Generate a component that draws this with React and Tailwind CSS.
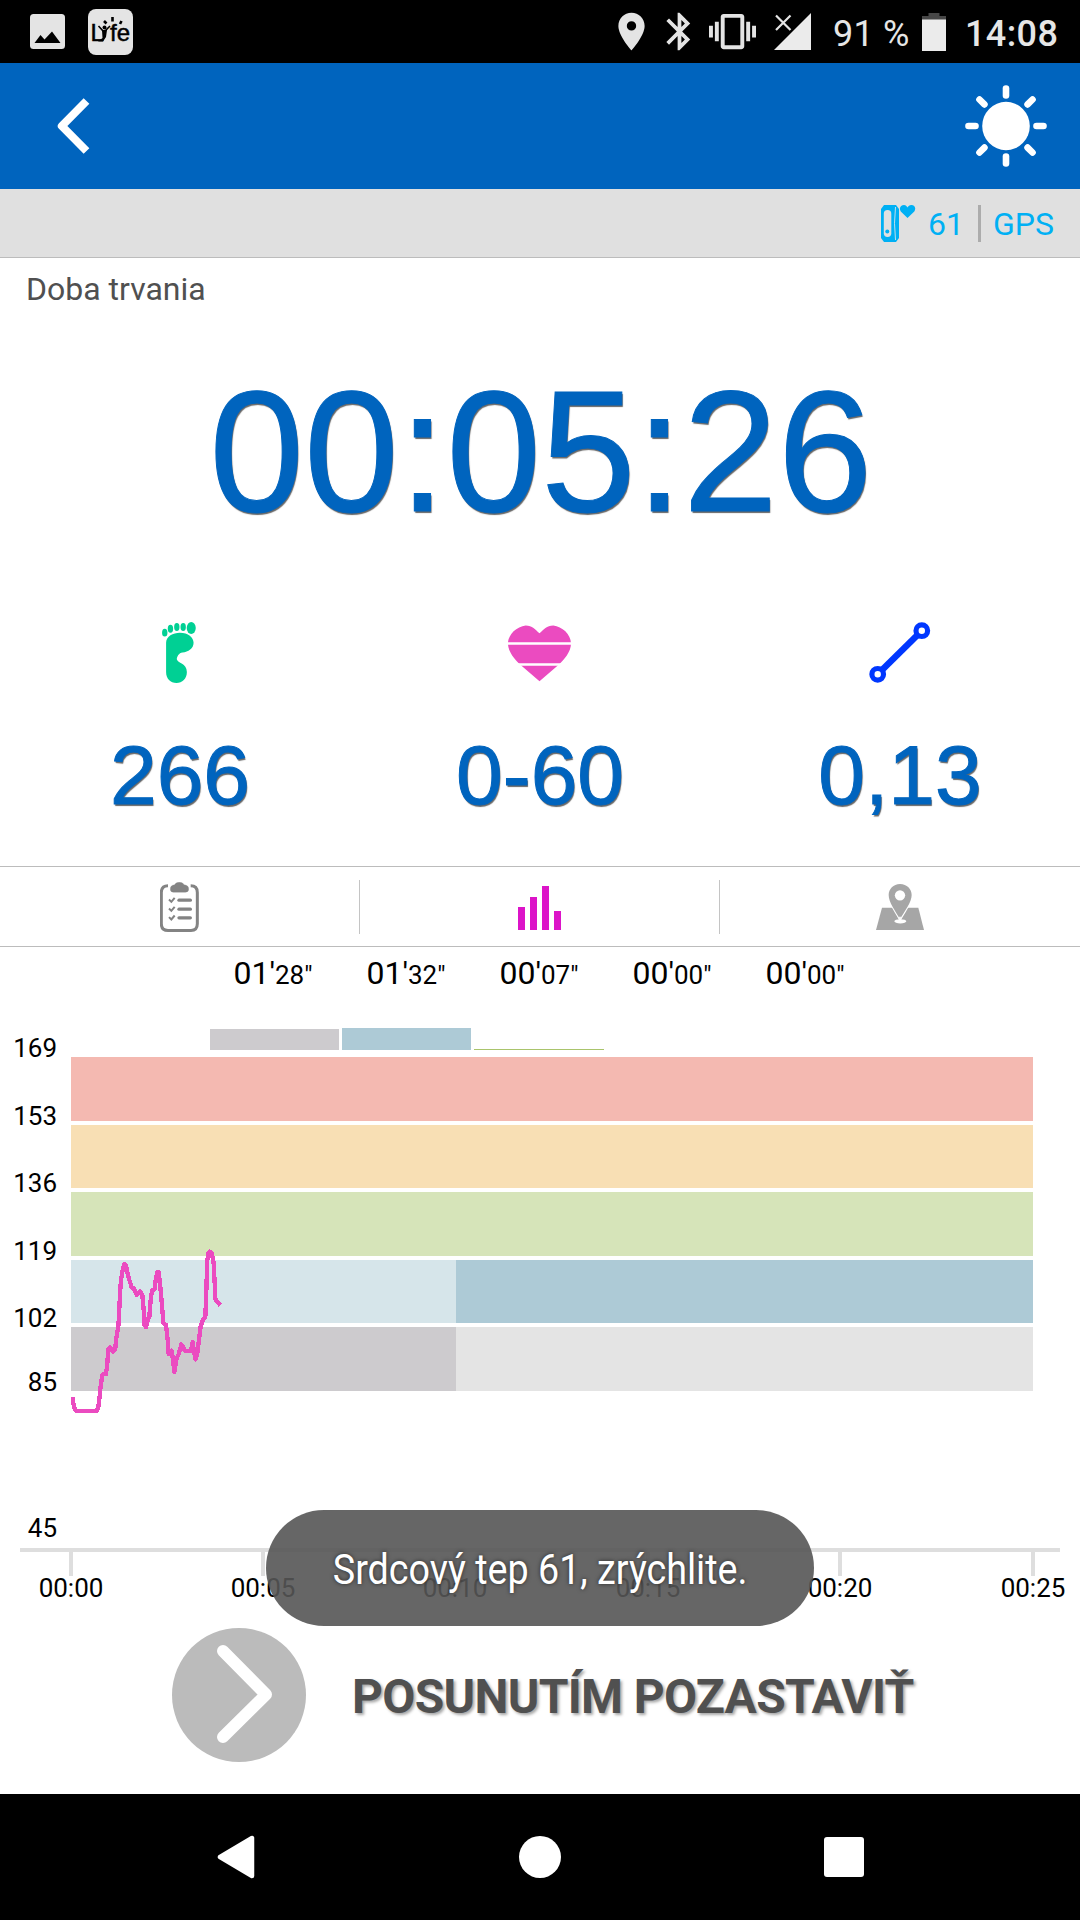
import React from 'react';
import { MdBluetooth, MdLocationOn, MdVibration } from 'react-icons/md';

const zoneTimes = [
  { min: '01', sec: '28' },
  { min: '01', sec: '32' },
  { min: '00', sec: '07' },
  { min: '00', sec: '00' },
  { min: '00', sec: '00' },
];

const bands = [
  { label: '169', y: 57, h: 64, color: '#f4b9b1' },
  { label: '153', y: 125, h: 63, color: '#f8dfb4' },
  { label: '136', y: 192, h: 64, color: '#d6e4b9' },
  { label: '119', y: 260, h: 63, color: '#d6e5ea', rest: '#adcad6' },
  { label: '102', y: 327, h: 64, color: '#cdcbce', rest: '#e4e4e4' },
];

const ticks = [
  { x: 71, label: '00:00' },
  { x: 263, label: '00:05' },
  { x: 455, label: '00:10' },
  { x: 648, label: '00:15' },
  { x: 840, label: '00:20' },
  { x: 1033, label: '00:25' },
];

// Heart rate samples, in thirds of a pixel
const heartRate =
  '218,532 220,550 223,562 228,573 290,573 295,560 299,530 300,515 303,490 308,463 318,463 322,430 325,387 330,382 340,395 346,385 348,360 355,320 357,290 360,220 363,180 368,150 373,132 378,137 385,170 395,202 402,206 410,225 420,215 427,225 431,270 433,315 438,321 443,300 448,290 452,240 456,212 464,207 467,180 472,156 476,156 480,190 484,235 488,280 490,308 498,315 503,360 506,402 515,392 519,420 523,456 530,415 537,400 544,373 556,393 573,393 578,366 583,400 587,418 592,400 597,360 602,320 608,302 616,290 618,240 620,180 622,120 626,98 630,95 636,102 641,130 644,190 646,235 650,243 661,256';

const StatusBar = () => (
  <div className="flex h-[63px] items-center bg-black pl-[30px] text-[36px] text-[#e6e6e6]">
    <svg width="35" height="35" viewBox="0 0 35 35">
      <rect width="35" height="35" rx="3.5" fill="#e4e4e4" />
      <path d="M4.5 29L10.5 21L14.5 25.5L22 17.5L30.500 29Z" fill="#000" />
    </svg>
    <svg className="ml-[23px]" width="45" height="46" viewBox="0 0 45 46">
      <rect width="45" height="46" rx="8" fill="#e4e4e4" />
      <text x="2.500" y="32" fontSize="24" fontFamily="Liberation Sans" stroke="#000" strokeWidth="0.5">L</text>
      <text x="22" y="32" fontSize="24" fontFamily="Liberation Sans" stroke="#000" strokeWidth="0.5" textLength="20">fe</text>
      <circle cx="16.500" cy="18.500" r="2" />
      <path d="M10.500 17L16 23L22 17" stroke="#000" strokeWidth="1.600" fill="none" />
      <path d="M14 21H19L18 28L15 32.500H10L14.500 29Z" />
      <path d="M16 12L18.500 14.500M24.500 8V12.500M33.500 12L32 15" stroke="#000" strokeWidth="2.600" />
    </svg>
    <MdLocationOn className="ml-[476px] text-[#e4e4e4]" size={45} />
    <MdBluetooth className="ml-[3px] text-[#e4e4e4]" size={45} />
    <MdVibration className="ml-[7px] text-[#e4e4e4]" size={47} />
    <svg className="ml-[18px]" width="37" height="37" viewBox="0 0 37 37">
      <path d="M0 37H37V0Z" fill="#ebebeb" />
      <path d="M2 2.500L16.500 17M16.500 2.500L2 17" stroke="#e4e4e4" strokeWidth="2.200" />
    </svg>
    <div className="ml-[22px] mt-[4px] w-[89px] whitespace-nowrap leading-[66px] tracking-[0.2px]">91 %</div>
    <svg width="24" height="38" viewBox="0 0 24 38">
      <path d="M0 3H6.500V0H17.500V3H24V8H0Z" fill="#474747" />
      <rect y="6.500" width="24" height="31.500" fill="#ebebeb" />
    </svg>
    <div className="ml-[19px] mt-[4px] font-medium leading-[66px] tracking-[0.4px]">14:08</div>
  </div>
);

const Header = () => (
  <div className="flex h-[126px] items-center justify-between bg-[#0064be] pl-[57px] pr-[33px]">
    <svg width="34" height="56" viewBox="0 0 34 56" fill="none">
      <path d="M29.500 3L4.800 28L29.500 53" stroke="#fff" strokeWidth="8" strokeLinejoin="round" />
    </svg>
    <svg width="82" height="84" viewBox="-41 -42 82 84">
      <ellipse rx="23.800" ry="24.200" fill="#fff" />
      {[0, 45, 90, 135, 180, 225, 270, 315].map((a) => (
        <path key={a} d="M0 -30.500V-37.500" transform={`rotate(${a})`} stroke="#fff" strokeWidth="6.600" strokeLinecap="round" />
      ))}
    </svg>
  </div>
);

const SensorBar = () => (
  <div className="flex h-[69px] items-center justify-end border-b border-[#bcbcbc] bg-[#e0e0e0] pr-[26px] text-[32px] text-[#00b0f4]">
    <svg width="35" height="37" viewBox="0 0 35 37" fill="#00b0f4">
      <path d="M3 0H15L18 4V33L15 37H3L0 33V4Z" />
      <rect x="2.800" y="5" width="7.500" height="27" rx="3.700" fill="#e0e0e0" />
      <path d="M14.500 2Q12.500 18 14.500 35" stroke="#bfe0ee" strokeWidth="1" fill="none" />
      <circle cx="6.300" cy="26.500" r="2" />
      <path d="M26.500 13L19.800 6.500C17.500 3 20 0 23 0C25 0 26 1.500 26.500 2.500C27 1.500 28 0 30.500 0C33.500 0 35.500 3 33.300 6.500Z" />
    </svg>
    <span className="ml-[12px] mt-[1px] w-[50px]">61</span>
    <span className="h-[37px] w-[3px] bg-[#acacac]" />
    <span className="ml-[12px] mt-[1px]">GPS</span>
  </div>
);

const FootIcon = () => (
  <svg className="mr-[2px]" width="34" height="61" viewBox="247 66 101 182" fill="#00d094">
    <ellipse cx="255" cy="98" rx="8" ry="11.500" />
    <ellipse cx="272" cy="86" rx="8" ry="12" />
    <ellipse cx="291" cy="81" rx="8" ry="12" />
    <ellipse cx="310" cy="81" rx="8" ry="12" />
    <ellipse cx="334" cy="84" rx="13.500" ry="18" />
    <path d="M259 128C259 108 280 98 300 98C325 98 341 112 341 128C341 145 325 156 308 157C297 158 291 170 291 177C293 189 321 188 321 215C321 235 307 248 290 248C272 248 259 235 259 215Z" />
  </svg>
);

const HeartIcon = () => (
  <svg className="mr-[1px]" width="63" height="61" viewBox="1284 66 189 182">
    <path
      d="M1378.500 99C1366 89 1357 76 1337 76C1311 79 1284 102 1284 130C1284 155 1305 179 1321 194L1378.500 243L1436 194C1452 179 1473 155 1473 130C1473 102 1446 79 1420 76C1400 76 1391 89 1378.500 99Z"
      fill="#eb4bc0"
    />
    <path d="M1284 130H1473M1284 193H1473" stroke="#fff" strokeWidth="8" />
  </svg>
);

const DistanceIcon = () => (
  <svg width="62" height="61" viewBox="869 622 62 61" fill="none" stroke="#0037ff">
    <circle cx="877.700" cy="674.300" r="5.800" strokeWidth="5.200" />
    <circle cx="921.800" cy="630.700" r="5.800" strokeWidth="5.200" />
    <path d="M882 670L917.500 635" strokeWidth="6.600" />
  </svg>
);

const Stat = ({ icon, value }) => (
  <div className="flex w-[360px] flex-col items-center">
    <div className="h-[80px]">{icon}</div>
    <div className="font-['Liberation_Sans'] text-[84px] leading-[146px] text-[#0064be] [-webkit-text-stroke:1px_#0064be] [text-shadow:1px_2px_1px_rgba(0,0,0,0.6)]">
      {value}
    </div>
  </div>
);

const ClipboardIcon = () => (
  <svg width="39" height="50" viewBox="60 34.500 117 150" fill="none" stroke="#838383">
    <path d="M84 46Q64 46 64 66V160Q64 180 84 180H153Q172 180 172 160V66Q172 46 152 46" strokeWidth="9" />
    <path d="M104 43Q107 35 118 35Q129 35 132 43Q146 44 146 56Q146 65 136 65H100Q91 65 91 56Q91 44 104 43Z" fill="#838383" />
    {[89, 116, 142].map((y) => (
      <g key={y}>
        <path d={`M87 ${y - 2}L94 ${y + 5}L104 ${y - 7}`} strokeWidth="6" />
        <path d={`M117 ${y}H151`} strokeWidth="10" strokeLinecap="round" />
      </g>
    ))}
  </svg>
);

const MapIcon = () => (
  <svg className="mr-[1px]" width="48" height="46" viewBox="46 40 144 138" fill="#a6a6a6">
    <path d="M64 111H173L190 178H46Z" />
    <path
      d="M118 40C98 40 84 55 84 73C84 95 104 120 118 146C132 120 153 95 153 73C153 55 139 40 118 40Z"
      stroke="#fff"
      strokeWidth="7"
      paintOrder="stroke"
    />
    <circle cx="118" cy="74" r="15.500" fill="#fff" />
    <ellipse cx="119" cy="152" rx="18" ry="6.500" fill="#fff" />
    <path d="M118 138V150" stroke="#fff" strokeWidth="5" />
  </svg>
);

const Tabs = () => (
  <div className="flex h-[81px] items-center border-y border-[#bcbcbc]">
    <div className="flex h-[54px] w-[360px] items-center justify-center border-r border-[#c4c4c4]">
      <ClipboardIcon />
    </div>
    <div className="flex h-[54px] w-[360px] items-center justify-center border-r border-[#c4c4c4]">
      <div className="mt-[2px] flex h-[44px] items-end gap-[5px]">
        <div className="h-[23px] w-[7px] bg-[#dc14c8]" />
        <div className="h-[33px] w-[7px] bg-[#dc14c8]" />
        <div className="h-[44px] w-[7px] bg-[#dc14c8]" />
        <div className="h-[19px] w-[7px] bg-[#dc14c8]" />
      </div>
    </div>
    <div className="flex h-[54px] w-[360px] items-center justify-center">
      <MapIcon />
    </div>
  </div>
);

const Chart = () => (
  <svg className="block" width="1080" height="627" viewBox="0 0 1080 627" fontFamily="Roboto, sans-serif" fontSize="26">
    {/* Time spent in each zone */}
    <rect x="210" y="29" width="129" height="21" fill="#cdcbce" />
    <rect x="342" y="28" width="129" height="22" fill="#adcad6" />
    <rect x="474" y="49" width="130" height="1" fill="#a9c46c" />

    {bands.map((b) => (
      <g key={b.label}>
        <rect x="71" y={b.y} width="962" height={b.h} fill={b.color} />
        {b.rest && <rect x="456" y={b.y} width="577" height={b.h} fill={b.rest} />}
        <text x="57" y={b.y} textAnchor="end">{b.label}</text>
      </g>
    ))}
    <text x="57" y="391" textAnchor="end">85</text>
    <text x="57" y="537" textAnchor="end">45</text>

    <polyline
      points={heartRate}
      transform="translate(0 220) scale(0.33333)"
      fill="none"
      stroke="#eb4bc0"
      strokeWidth="13"
      strokeLinejoin="round"
      shapeRendering="crispEdges"
    />

    <rect x="20" y="548" width="1040" height="4" fill="#dedede" />
    {ticks.map((t) => (
      <g key={t.label}>
        <rect x={t.x - 2} y="552" width="4" height="24" fill="#dedede" />
        <text x={t.x} y="597" textAnchor="middle">{t.label}</text>
      </g>
    ))}
  </svg>
);

const SlideToPause = () => (
  <div className="flex h-[167px] items-start pl-[171px]">
    <svg width="136" height="136" viewBox="0 0 136 136" fill="none">
      <circle cx="68" cy="68" r="67" fill="#bbb" />
      <path d="M52 24L95 67.500L52 110" stroke="#fff" strokeWidth="12" strokeLinecap="round" strokeLinejoin="round" />
    </svg>
    <div className="ml-[45px] whitespace-nowrap text-[48px] font-bold leading-[139px] tracking-[-0.68px] text-[#505050] [text-shadow:2px_2px_3px_rgba(0,0,0,0.35)]">
      POSUNUTÍM POZASTAVIŤ
    </div>
  </div>
);

const NavBar = () => (
  <div className="flex h-[126px] items-center justify-between bg-black pl-[217px] pr-[216px]">
    <svg width="38" height="44" viewBox="0 0 38 44">
      <path d="M35 3V41L3 22Z" fill="#fff" stroke="#fff" strokeWidth="4.500" strokeLinejoin="round" />
    </svg>
    <div className="h-[42px] w-[42px] rounded-full bg-white" />
    <div className="h-[40px] w-[40px] rounded-[3px] bg-white" />
  </div>
);

const App = () => {
  return (
    <div className="relative h-[1920px] w-[1080px] overflow-hidden bg-white font-['Roboto',sans-serif] text-black">
      <StatusBar />
      <Header />
      <SensorBar />

      <div className="h-[62px] pl-[26px] text-[32px] leading-[62px] text-[#505050]">Doba trvania</div>
      <div className="h-[265px] scale-x-[0.985] pl-[2px] text-center font-['Liberation_Sans'] text-[173px] leading-[262px] text-[#0064be] [-webkit-text-stroke:1px_#0064be] [text-shadow:1px_2px_1px_rgba(0,0,0,0.6)]">
        00:05:26
      </div>

      <div className="flex h-[281px] pt-[37px]">
        <Stat icon={<FootIcon />} value="266" />
        <Stat icon={<HeartIcon />} value="0-60" />
        <Stat icon={<DistanceIcon />} value="0,13" />
      </div>

      <Tabs />

      <div className="flex h-[53px] justify-center pr-[2px]">
        {zoneTimes.map((z, i) => (
          <div key={i} className="w-[133px] text-center text-[32px] leading-[52px]">
            {z.min}'<span className="text-[26px]">{z.sec}"</span>
          </div>
        ))}
      </div>

      <Chart />
      <SlideToPause />
      <NavBar />

      {/* Toast */}
      <div className="absolute left-[266px] top-[1510px] flex h-[116px] w-[548px] items-center justify-center rounded-full bg-[rgba(85,85,85,0.9)]">
        <span className="mt-[2px] scale-x-[0.897] whitespace-nowrap text-[42px] text-white [text-shadow:0_0_5px_rgba(0,0,0,0.6)]">
          Srdcový tep 61, zrýchlite.
        </span>
      </div>
    </div>
  );
};

export default App;
